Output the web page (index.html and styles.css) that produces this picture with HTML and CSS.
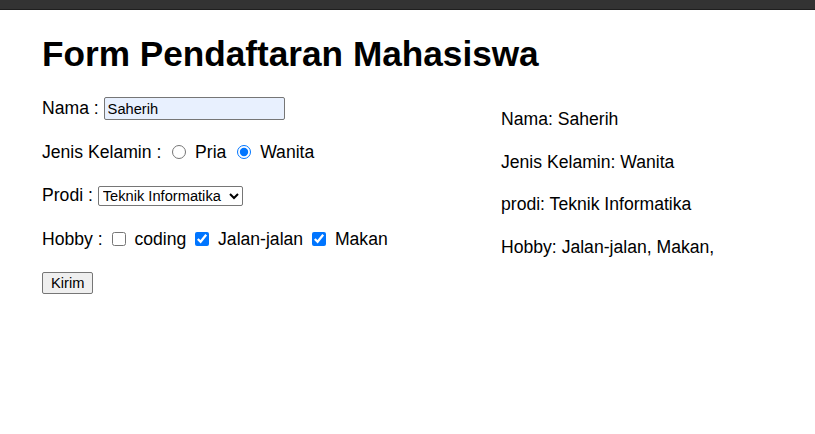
FILE: index.html
```html
<!DOCTYPE html>
<html>
<head>
<meta charset="utf-8">
<link rel="stylesheet" href="styles.css">
</head>
<body>
<div class="topbar"></div>
<main class="page">
  <h1 class="title">Form Pendaftaran Mahasiswa</h1>
  <div class="columns">
    <form class="form">
      <div class="row">Nama : <input class="text" type="text" value="Saherih"></div>
      <div class="row">Jenis Kelamin : <input class="opt" type="radio" name="jk"> Pria <input class="opt" type="radio" name="jk" checked> Wanita</div>
      <div class="row">Prodi : <select class="sel"><option>Teknik Informatika</option><option>Sistem Informasi</option></select></div>
      <div class="row">Hobby : <input class="chk" type="checkbox"> coding <input class="chk" type="checkbox" checked> Jalan-jalan <input class="chk" type="checkbox" checked> Makan</div>
      <div class="row"><button class="btn" type="button">Kirim</button></div>
    </form>
    <div class="result">
      <p class="line">Nama: Saherih</p>
      <p class="line">Jenis Kelamin: Wanita</p>
      <p class="line">prodi: Teknik Informatika</p>
      <p class="line">Hobby: Jalan-jalan, Makan,</p>
    </div>
  </div>
</main>
</body>
</html>
```
FILE: styles.css
```css
html, body {
  margin: 0;
  padding: 0;
  background: #fff;
}
body {
  font-family: "Liberation Sans", Arial, sans-serif;
  font-size: 17.6px;
  color: #000;
}
.topbar {
  height: 9px;
  background: #333;
  border-bottom: 1px solid #1f1f1f;
}
.page {
  padding: 0 42px;
}
.title {
  font-size: 35.2px;
  font-weight: bold;
  margin: 0;
  padding-top: 24px;
  line-height: 40px;
}
.columns {
  display: flex;
  margin-top: 13px;
}
.form {
  width: 459px;
  flex: none;
  display: flex;
  flex-direction: column;
}
.row {
  height: 43.5px;
  display: flex;
  align-items: center;
  white-space: pre;
}
.opt {
  width: 14px;
  height: 14px;
  margin: 0 4px 0 6px;
  accent-color: #0075ff;
}
.chk {
  width: 14px;
  height: 14px;
  margin: 0 4px 0 4px;
  accent-color: #0075ff;
}
.text {
  font-family: "Liberation Sans", Arial, sans-serif;
  font-size: 14.67px;
  background: #e8f0fe;
  border: 1px solid #767676;
  border-radius: 2px;
  width: 181px;
  height: 23px;
  box-sizing: border-box;
  padding: 1px 3px;
  margin: 0;
}
.sel {
  font-family: "Liberation Sans", Arial, sans-serif;
  font-size: 14.67px;
  margin-left: 0;
  border: 1px solid #767676;
  border-radius: 2px;
  background: #fff;
  height: 20px;
  width: 145px;
  padding: 0;
}
.btn {
  font-family: "Liberation Sans", Arial, sans-serif;
  font-size: 14.67px;
  padding: 1px 8px;
  background: #efefef;
  border: 1px solid #767676;
  border-radius: 2px;
  height: 22px;
  width: 51px;
}
.result {
  padding-top: 11px;
}
.line {
  margin: 0;
  height: 42.7px;
  display: flex;
  align-items: center;
}
```
